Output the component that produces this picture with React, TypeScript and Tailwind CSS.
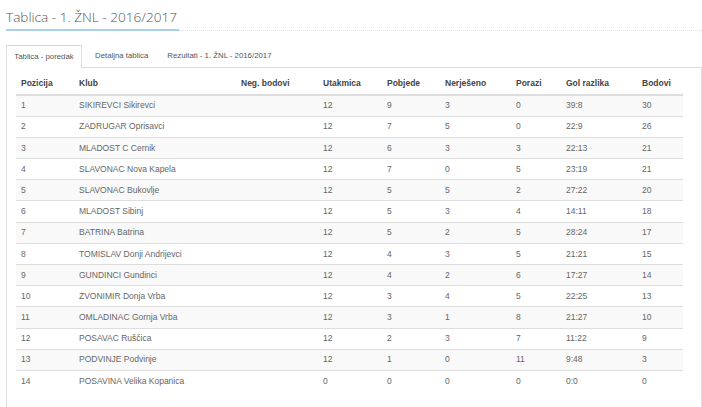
import React from 'react';

type Row = [number, string, string, number, number, number, number, string, number];

const rows: Row[] = [
  [1, 'SIKIREVCI Sikirevci', '', 12, 9, 3, 0, '39:8', 30],
  [2, 'ZADRUGAR Oprisavci', '', 12, 7, 5, 0, '22:9', 26],
  [3, 'MLADOST C Cernik', '', 12, 6, 3, 3, '22:13', 21],
  [4, 'SLAVONAC Nova Kapela', '', 12, 7, 0, 5, '23:19', 21],
  [5, 'SLAVONAC Bukovlje', '', 12, 5, 5, 2, '27:22', 20],
  [6, 'MLADOST Sibinj', '', 12, 5, 3, 4, '14:11', 18],
  [7, 'BATRINA Batrina', '', 12, 5, 2, 5, '28:24', 17],
  [8, 'TOMISLAV Donji Andrijevci', '', 12, 4, 3, 5, '21:21', 15],
  [9, 'GUNDINCI Gundinci', '', 12, 4, 2, 6, '17:27', 14],
  [10, 'ZVONIMIR Donja Vrba', '', 12, 3, 4, 5, '22:25', 13],
  [11, 'OMLADINAC Gornja Vrba', '', 12, 3, 1, 8, '21:27', 10],
  [12, 'POSAVAC Ruščica', '', 12, 2, 3, 7, '11:22', 9],
  [13, 'PODVINJE Podvinje', '', 12, 1, 0, 11, '9:48', 3],
  [14, 'POSAVINA Velika Kopanica', '', 0, 0, 0, 0, '0:0', 0],
];

const headers = ['Pozicija', 'Klub', 'Neg. bodovi', 'Utakmica', 'Pobjede', 'Nerješeno', 'Porazi', 'Gol razlika', 'Bodovi'];
const widths = ['w-[58px]', 'w-[162px]', 'w-[82px]', 'w-[64px]', 'w-[58px]', 'w-[71px]', 'w-[50px]', 'w-[76px]', 'w-[46px]'];

export default function App() {
  return (
    <div className="bg-white w-[702px] h-[407px] overflow-hidden pl-[6px] font-['Liberation_Sans',Arial,sans-serif]">
      <div className="pt-[6px] border-b border-dotted border-[#ddd] flex">
        <h1 className="font-['Open_Sans',sans-serif] font-light text-[13.6px] leading-[22px] text-[#555] pb-[1px] border-b-2 border-[#a9d1ea] -mb-px pr-[2px]">
          Tablica - 1. ŽNL - 2016/2017
        </h1>
      </div>

      <div className="mt-[14px] flex text-[7.8px] text-[#555] leading-none">
        <div className="w-[76px] h-[23px] flex items-center justify-center border border-b-0 border-[#ddd] border-t-[#c3dcee] bg-white -mb-px relative">
          Tablica - poredak
        </div>
        <div className="h-[22px] pl-[13px] pr-[19px] flex items-center">Detaljna tablica</div>
        <div className="h-[22px] flex items-center">Rezultati - 1. ŽNL - 2016/2017</div>
      </div>

      <div className="border border-[#ddd] pt-[4px] pl-[9px] h-[400px]">
        <table className="table-fixed w-[667px] border-collapse text-[8.5px] text-[#666]">
          <thead>
            <tr className="h-[23px] border-b-2 border-[#ddd]">
              {headers.map((h, i) => (
                <th key={h} className={`${widths[i]} text-left font-bold text-[#444] pl-[5px] whitespace-nowrap`}>
                  {h}
                </th>
              ))}
            </tr>
          </thead>
          <tbody>
            {rows.map((r, idx) => (
              <tr key={r[0]} className={`h-[21.2px] border-b border-[#ddd] ${idx % 2 === 0 ? 'bg-[#f9f9f9]' : 'bg-white'} ${idx === rows.length - 1 ? 'border-b-0' : ''}`}>
                {r.map((c, i) => (
                  <td key={i} className="pl-[5px] whitespace-nowrap">{c}</td>
                ))}
              </tr>
            ))}
          </tbody>
        </table>
      </div>
    </div>
  );
}
